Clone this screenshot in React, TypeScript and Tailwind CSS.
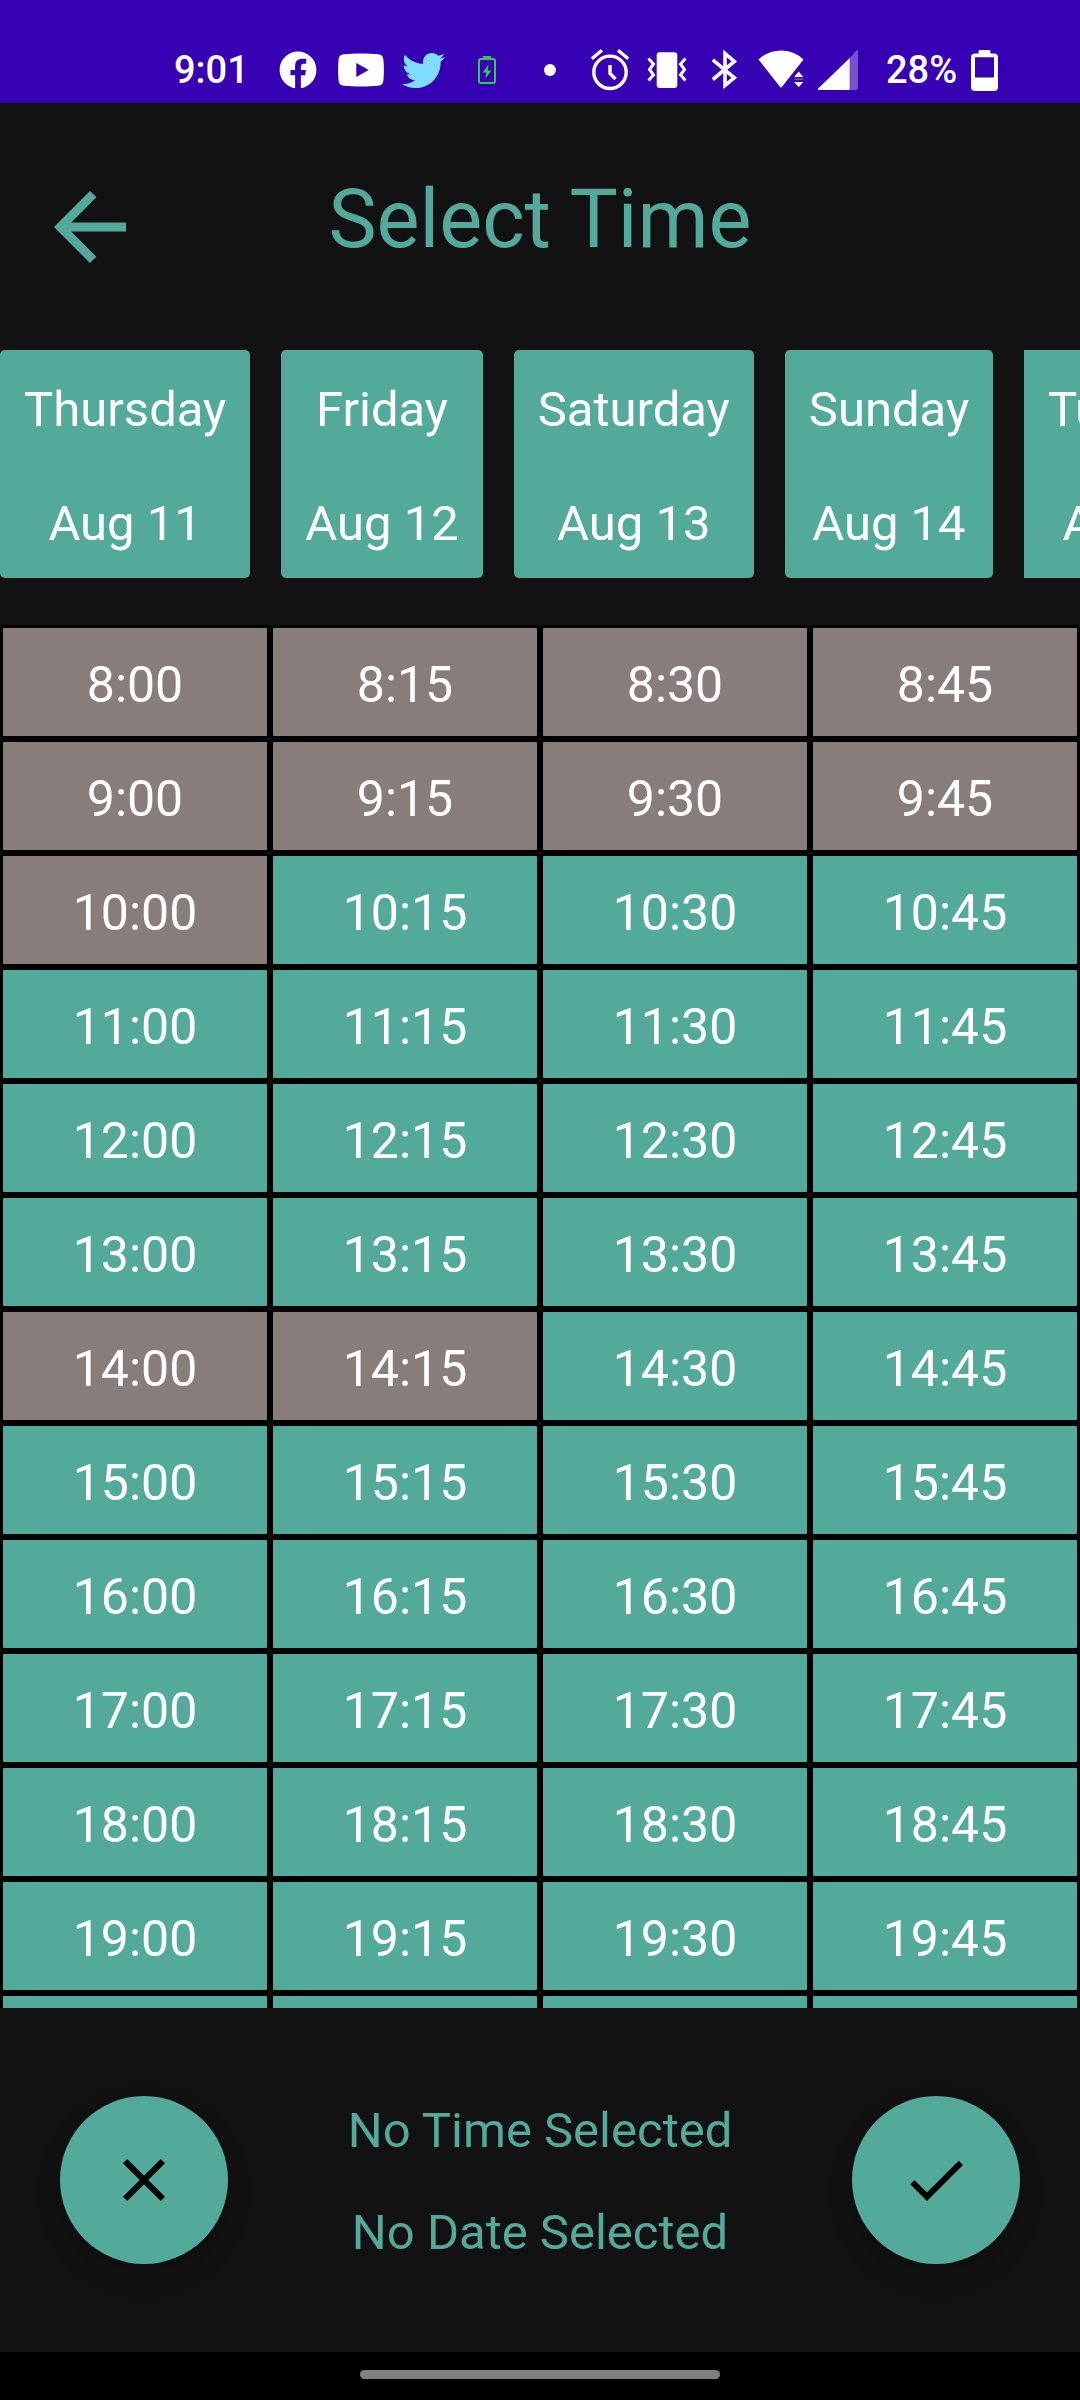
import { useState } from "react";
import type { ReactNode } from "react";
import { FaFacebook, FaTwitter } from "react-icons/fa";

const DAYS = [
  { day: "Thursday", date: "Aug 11" },
  { day: "Friday", date: "Aug 12" },
  { day: "Saturday", date: "Aug 13" },
  { day: "Sunday", date: "Aug 14" },
  { day: "Tuesday", date: "Aug 16" },
];

const HOURS = [8, 9, 10, 11, 12, 13, 14, 15, 16, 17, 18, 19, 20];
const SLOTS = HOURS.flatMap((hour) => ["00", "15", "30", "45"].map((minute) => `${hour}:${minute}`));

const TAKEN = new Set([
  "8:00", "8:15", "8:30", "8:45",
  "9:00", "9:15", "9:30", "9:45",
  "10:00", "14:00", "14:15",
]);

function NoticeIcon({ children }: { children: ReactNode }) {
  return <span className="flex w-[63px] shrink-0 items-center justify-center">{children}</span>;
}

function SystemIcon({ children }: { children: ReactNode }) {
  return (
    <span className="flex w-[57px] shrink-0 items-center justify-center">
      <svg viewBox="0 0 48 48" className="size-12" fill="none" stroke="none" aria-hidden="true">
        {children}
      </svg>
    </span>
  );
}

function StatusBar() {
  return (
    <div className="flex h-[103px] shrink-0 items-center overflow-hidden bg-[#3700b3] pt-[37px] pl-[174px] text-[38px] leading-12 font-medium text-white">
      <span className="w-[92px] shrink-0">9:01</span>
      <NoticeIcon>
        <FaFacebook className="size-[38px]" />
      </NoticeIcon>
      <NoticeIcon>
        <svg viewBox="0 0 46 34" className="h-[34px] w-[46px]" aria-hidden="true">
          <path
            fill="currentColor"
            fillRule="evenodd"
            d="M6 1.2C16 .3 30 .3 40 1.2c3.600.3 5 2 5.400 5.300.7 7 .7 14 0 21-.4 3.300-1.800 5-5.400 5.300-10 .9-24 .9-34 0-3.600-.3-5-2-5.400-5.300-.7-7-.7-14 0-21C1 3.200 2.400 1.500 6 1.200ZM18.300 10v14l12.400-7Z"
          />
        </svg>
      </NoticeIcon>
      <NoticeIcon>
        <FaTwitter className="size-[43px] text-[#7fdbff]" />
      </NoticeIcon>
      <NoticeIcon>
        <svg viewBox="0 0 18 28" className="h-7 w-[18px] text-[#35c759]" aria-hidden="true">
          <rect x="1" y="3" width="16" height="24" rx="2" fill="none" stroke="currentColor" strokeWidth="2" />
          <path fill="currentColor" d="M5 0h8v3H5zM10.500 8.500 4.500 16.500h3.700L7.500 22.500l6-8H9.800Z" />
        </svg>
      </NoticeIcon>
      <NoticeIcon>
        <span className="size-3 rounded-full bg-white" />
      </NoticeIcon>
      <span className="flex shrink-0">
        <SystemIcon>
          <circle cx="24" cy="26.300" r="16.200" stroke="currentColor" strokeWidth="3.400" />
          <path stroke="currentColor" strokeWidth="3.400" d="M5.800 12.700 16 4.200M42.200 12.700 32 4.200M24 19v8.500l5.500 5.500" />
        </SystemIcon>
        <SystemIcon>
          <rect x="13.700" y="6.300" width="20.600" height="35.700" rx="3" fill="currentColor" />
          <path
            stroke="currentColor"
            strokeWidth="3"
            d="m5.500 12.500 5 5.500-4 5.500 4 5.500-5 5.500M42.500 12.500l-5 5.500 4 5.500-4 5.500 5 5.500"
          />
        </SystemIcon>
        <SystemIcon>
          <path stroke="currentColor" strokeWidth="3.600" d="m12.800 13.800 21.500 18L25 39.500v-32l9.300 8-21.500 18" />
        </SystemIcon>
        <SystemIcon>
          <path fill="currentColor" d="M1.500 13.500C14 1.500 34 1.500 46.500 13.500L24.800 41q-.8 1-1.600 0Z" />
          <path fill="currentColor" d="m41.700 25.500 4.500 5.500h-9zM37.200 36h9l-4.500 5.200z" />
          <path fill="currentColor" opacity=".4" d="M37.200 32.500h9v1.200h-9z" />
        </SystemIcon>
        <SystemIcon>
          <path fill="currentColor" d="M35.700 12v32H5c-1 0-1.500-1-.8-1.600Z" />
          <path fill="currentColor" opacity=".32" d="M35.700 12 42.500 4.500q1.500-1 1.500.8V42q0 2-2 2h-6.300Z" />
        </SystemIcon>
      </span>
      <span className="ml-5 shrink-0">28%</span>
      <svg viewBox="0 0 27 41" className="ml-3.5 h-[41px] w-[27px] shrink-0" aria-hidden="true">
        <path
          fill="currentColor"
          fillRule="evenodd"
          d="M9 0h9q1.500 0 1.500 1.500V3.500H23q4 0 4 4V37q0 4-4 4H4q-4 0-4-4V7.500q0-4 4-4h3.500V1.500Q7.500 0 9 0ZM4 7.300V27.500h19V7.300Z"
        />
      </svg>
    </div>
  );
}

export default function App() {
  const [day, setDay] = useState<string | null>(null);
  const [time, setTime] = useState<string | null>(null);

  return (
    <div className="flex h-screen flex-col overflow-hidden bg-[#121212] font-[Roboto,sans-serif] text-[49px] leading-[60px] text-white">
      <StatusBar />

      <header className="grid shrink-0 grid-cols-[1fr_auto_1fr] items-start px-9 pt-[70px] pb-[69px] text-[#54aa9a]">
        <button type="button" aria-label="Back" className="size-[108px]">
          <svg viewBox="0 0 24 24" className="size-full" fill="currentColor" aria-hidden="true">
            <path d="M20 11H7.830l5.590-5.590L12 4l-8 8 8 8 1.410-1.410L7.830 13H20v-2z" />
          </svg>
        </button>
        <h1 className="text-[81px] leading-[94px]">Select Time</h1>
      </header>

      <div className="flex shrink-0 gap-[31px] overflow-x-auto [scrollbar-width:none]">
        {DAYS.map((item) => (
          <button
            key={item.date}
            type="button"
            onClick={() => setDay(item.date)}
            className="flex shrink-0 flex-col items-center gap-[54px] rounded-[5px] bg-[#54aa9a] px-6 pt-[30px] pb-[24px] last:rounded-l-none"
          >
            <span>{item.day}</span>
            <span>{item.date}</span>
          </button>
        ))}
      </div>

      <main className="mt-[47px] grid min-h-0 flex-1 auto-rows-min grid-cols-4 overflow-y-auto text-[50px] leading-[60px] [scrollbar-width:none]">
        {SLOTS.map((slot) => (
          <button
            key={slot}
            type="button"
            disabled={TAKEN.has(slot)}
            onClick={() => setTime(slot)}
            className="rounded-[4px] border-3 border-black bg-[#54aa9a] pt-[27px] pb-[21px] text-center disabled:bg-[#877d7b]"
          >
            {slot}
          </button>
        ))}
      </main>

      <footer className="flex shrink-0 items-center justify-between px-[60px] py-[68px]">
        <button
          type="button"
          aria-label="Cancel"
          className="flex size-[168px] items-center justify-center rounded-full bg-[#54aa9a] text-black shadow-[0_12px_24px_rgba(0,0,0,0.2)]"
        >
          <svg viewBox="0 0 24 24" className="size-[72px]" fill="currentColor" aria-hidden="true">
            <path d="M19 6.410 17.590 5 12 10.590 6.410 5 5 6.410 10.590 12 5 17.590 6.410 19 12 13.410 17.590 19 19 17.590 13.410 12z" />
          </svg>
        </button>
        <div className="pt-1 text-center leading-[102px] text-[#54aa9a]">
          <p>{time ?? "No Time Selected"}</p>
          <p>{day ?? "No Date Selected"}</p>
        </div>
        <button
          type="button"
          aria-label="Confirm"
          className="flex size-[168px] items-center justify-center rounded-full bg-[#54aa9a] text-black shadow-[0_12px_24px_rgba(0,0,0,0.2)]"
        >
          <svg viewBox="0 0 24 24" className="size-[72px]" fill="currentColor" aria-hidden="true">
            <path d="M9 16.170 4.830 12l-1.420 1.410L9 19 21 7l-1.410-1.410z" />
          </svg>
        </button>
      </footer>

      <div className="flex h-12 shrink-0 items-start justify-center bg-black pt-[18px]">
        <span className="h-[9px] w-1/3 rounded-full bg-[#808080]" />
      </div>
    </div>
  );
}
